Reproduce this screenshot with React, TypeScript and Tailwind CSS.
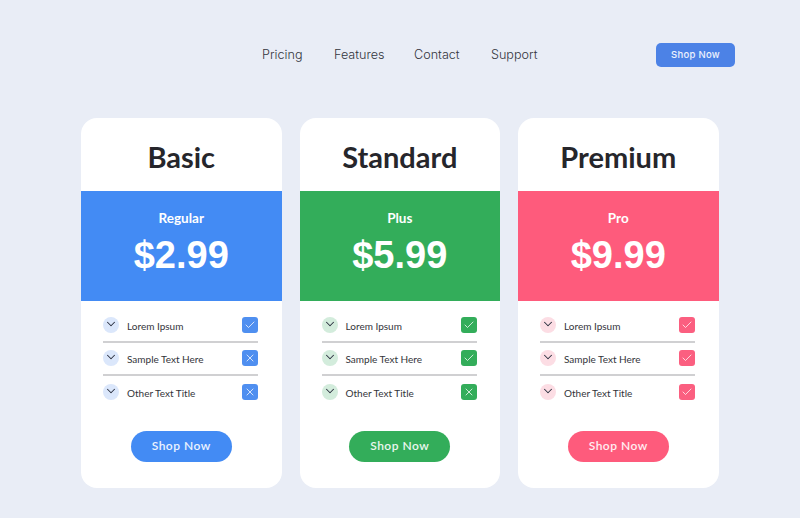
import React from 'react';
import { Check, ChevronDown, X } from 'lucide-react';

type Feature = { label: string; ok: boolean };

type Plan = {
  name: string;
  tier: string;
  price: string;
  band: string;
  soft: string;
  box: string;
  features: Feature[];
};

const plans: Plan[] = [
  {
    name: 'Basic',
    tier: 'Regular',
    price: '$2.99',
    band: 'bg-[#438bf4]',
    soft: 'bg-[#dbe7fb]',
    box: 'bg-[#4f8ff0]',
    features: [
      { label: 'Lorem Ipsum', ok: true },
      { label: 'Sample Text Here', ok: false },
      { label: 'Other Text Title', ok: false },
    ],
  },
  {
    name: 'Standard',
    tier: 'Plus',
    price: '$5.99',
    band: 'bg-[#33ad5a]',
    soft: 'bg-[#d3ecdc]',
    box: 'bg-[#33ad5a]',
    features: [
      { label: 'Lorem Ipsum', ok: true },
      { label: 'Sample Text Here', ok: true },
      { label: 'Other Text Title', ok: false },
    ],
  },
  {
    name: 'Premium',
    tier: 'Pro',
    price: '$9.99',
    band: 'bg-[#fe5b7c]',
    soft: 'bg-[#fcdde4]',
    box: 'bg-[#fb5f80]',
    features: [
      { label: 'Lorem Ipsum', ok: true },
      { label: 'Sample Text Here', ok: true },
      { label: 'Other Text Title', ok: true },
    ],
  },
];

const FeatureRow = ({ feature, plan, last }: { feature: Feature; plan: Plan; last: boolean }) => (
  <li className={`h-[33px] pb-[1px] flex items-center justify-between ${last ? '' : 'border-b-2 border-[#d0d0d2]'}`}>
    <div className="flex items-center">
      <span className={`w-4 h-4 rounded-full flex items-center justify-center ${plan.soft}`}>
        <ChevronDown size={14} strokeWidth={1.75} className="-mt-[2px] text-[#2b3040]" />
      </span>
      <span className="ml-2 pt-[3px] text-[10px] text-[#33343a] font-['Lato',sans-serif]">{feature.label}</span>
    </div>
    <span className={`w-4 h-4 rounded-[3px] flex items-center justify-center ${plan.box}`}>
      {feature.ok ? (
        <Check size={12} strokeWidth={1.5} className="text-white" />
      ) : (
        <X size={12} strokeWidth={1.5} className="text-white" />
      )}
    </span>
  </li>
);

const PlanCard = ({ plan }: { plan: Plan }) => (
  <div className="w-[200.5px] h-[370px] bg-white rounded-2xl overflow-hidden flex flex-col">
    <div className="h-[73px] pt-[5px] flex items-center justify-center">
      <h2 className="text-[29px] font-bold text-[#26262b] font-['Lato',sans-serif]">{plan.name}</h2>
    </div>
    <div className={`h-[110px] flex flex-col items-center text-white ${plan.band}`}>
      <span className="mt-[19px] text-[13.5px] leading-[16px] font-bold font-['Lato',sans-serif]">{plan.tier}</span>
      <span className="mt-[8px] text-[38px] leading-[42px] font-bold font-['Liberation_Sans',sans-serif]">{plan.price}</span>
    </div>
    <ul className="mt-[9px] pl-[22px] pr-[23.5px]">
      {plan.features.map((feature, i) => (
        <FeatureRow key={feature.label} feature={feature} plan={plan} last={i === plan.features.length - 1} />
      ))}
    </ul>
    <div className="mt-[22px] flex justify-center">
      <button className={`w-[101px] h-[31px] pb-[2px] rounded-full text-white/90 text-[12px] font-semibold tracking-[0.5px] font-['Lato',sans-serif] ${plan.band}`}>
        Shop Now
      </button>
    </div>
  </div>
);

const App = () => {
  return (
    <div className="w-[800px] h-[518px] bg-[#e9edf6] overflow-hidden">
      <header className="h-[118px] pt-[43px] pl-[262px] pr-[65px] flex items-start justify-between">
        <nav className="h-[24px] flex items-center text-[12.6px] font-light text-[#33353d] font-['Inter',sans-serif]">
          <a className="w-[72px]">Pricing</a>
          <a className="w-[80px]">Features</a>
          <a className="w-[77px]">Contact</a>
          <a>Support</a>
        </nav>
        <button className="w-[79px] h-6 rounded-[5px] bg-[#4c82e6] text-white/90 text-[9.5px] font-medium tracking-[0.3px] font-['Inter',sans-serif]">
          Shop Now
        </button>
      </header>
      <main className="pl-[81px] flex gap-[18px]">
        {plans.map((plan) => (
          <PlanCard key={plan.name} plan={plan} />
        ))}
      </main>
    </div>
  );
};

export default App;
